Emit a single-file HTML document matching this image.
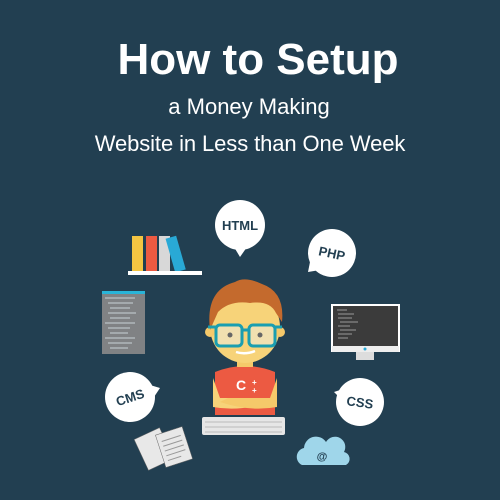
<!DOCTYPE html>
<html><head><style>
html,body{margin:0;padding:0}
body{width:500px;height:500px;background:#223f51;position:relative;overflow:hidden;font-family:"Liberation Sans",sans-serif;color:#fff}
.t{position:absolute;white-space:nowrap;text-align:center}
</style></head><body>
<div class="t" style="left:0;width:516px;top:36px;font-size:44px;font-weight:bold;line-height:48px">How to Setup</div>
<div class="t" style="left:0;width:498px;top:94px;font-size:22px;line-height:26px">a Money Making</div>
<div class="t" style="left:0;width:500px;top:131px;font-size:22px;line-height:26px;letter-spacing:-0.1px">Website in Less than One Week</div>
<svg width="500" height="500" style="position:absolute;left:0;top:0" font-family="Liberation Sans, sans-serif" font-weight="bold">
<circle cx="240" cy="225" r="25" fill="#fff"/><path d="M234 247 L240 257 L247 247Z" fill="#fff"/>
<text x="240" y="230" font-size="13" fill="#223f51" text-anchor="middle">HTML</text>
<circle cx="332" cy="253" r="24" fill="#fff"/><path d="M310 262 L308 272 L320 270Z" fill="#fff"/>
<text x="332" y="258" font-size="13" fill="#223f51" text-anchor="middle" transform="rotate(12 332 253)">PHP</text>
<circle cx="130" cy="397" r="25" fill="#fff"/><path d="M150 385 L160 388 L152 400Z" fill="#fff"/>
<text x="130" y="402" font-size="13" fill="#223f51" text-anchor="middle" transform="rotate(-18 130 397)">CMS</text>
<circle cx="360" cy="402" r="24" fill="#fff"/><path d="M340 390 L334 392 L342 400Z" fill="#fff"/>
<text x="360" y="407" font-size="13" fill="#223f51" text-anchor="middle" transform="rotate(8 360 402)">CSS</text>
<rect x="132" y="236" width="11" height="35" fill="#f4c542"/>
<rect x="146" y="236" width="11" height="35" fill="#ec5a42"/>
<rect x="159" y="236" width="11" height="35" fill="#d8d8d8"/>
<rect x="175" y="236" width="11" height="35" fill="#29a9d6" transform="rotate(-16 180 271)"/>
<rect x="128" y="271" width="74" height="4" fill="#fff"/>
<rect x="102" y="291" width="43" height="63" fill="#808284"/>
<rect x="102" y="291" width="43" height="3" fill="#29b4d8"/>
<g stroke="#c9d2d6" stroke-width="1">
<path d="M105 298h30M108 303h25M110 308h20M108 313h28M110 318h20M105 323h30M108 328h22M110 333h18M105 338h30M108 343h24M110 348h18"/></g>
<rect x="331" y="304" width="69" height="48" fill="#fff"/>
<rect x="333" y="306" width="65" height="40" fill="#3b3b3b"/>
<g stroke="#999" stroke-width="1"><path d="M337 310h10M338 314h16M338 318h14M340 322h18M338 326h12M340 330h16M338 334h14M338 338h10"/></g>
<rect x="332" y="346" width="67" height="6" fill="#eee"/><circle cx="365" cy="349" r="1.5" fill="#29a9d6"/>
<rect x="356" y="352" width="18" height="8" fill="#ddd"/>
<g fill="#e8e8e8" stroke="#666" stroke-width="0.5">
<rect x="140" y="432" width="28" height="34" transform="rotate(-25 154 449)"/>
<rect x="160" y="430" width="28" height="34" transform="rotate(-18 174 447)"/></g>
<g stroke="#999" stroke-width="1" transform="rotate(-18 174 447)"><path d="M164 438h20M164 443h20M164 448h20M164 453h20M164 458h14"/></g>
<path d="M302 465 a9 9 0 0 1 2 -17 a12 12 0 0 1 22 -6 a10 10 0 0 1 18 10 a7 7 0 0 1 2 13Z" fill="#9fd6ea"/>
<text x="322" y="460" font-size="11" fill="#223f51" text-anchor="middle">@</text>
<rect x="202" y="417" width="83" height="18" rx="2" fill="#e6e6e6"/>
<g stroke="#bbb"><path d="M205 422h77M205 427h77M205 432h77"/></g>
<path d="M215 372 Q245 360 275 372 L275 415 L215 415Z" fill="#ec5a42"/>
<path d="M213 378 L213 407 Q240 412 270 402 L262 398 L220 398Z" fill="#f7d379"/>
<path d="M277 378 L277 407 Q250 412 220 402 L228 398 L270 398Z" fill="#f5c96a"/>
<text x="241" y="390" font-size="14" fill="#fff" text-anchor="middle">C</text>
<text x="252" y="385" font-size="8" fill="#fff">+</text><text x="252" y="393" font-size="8" fill="#fff">+</text>
<rect x="237" y="355" width="16" height="12" fill="#f5c96a"/>
<ellipse cx="245" cy="327" rx="35" ry="36" fill="#f7d379"/>
<circle cx="210" cy="332" r="5" fill="#f5c96a"/><circle cx="280" cy="332" r="5" fill="#f5c96a"/>
<path d="M210 330 Q205 290 235 282 Q245 276 262 284 Q285 292 282 322 L276 313 Q270 300 250 303 Q230 300 218 312 Z" fill="#c46a2d"/>
<rect x="216" y="325" width="26" height="21" rx="4" fill="#f1e0b0" stroke="#1a9eb0" stroke-width="3"/>
<rect x="249" y="325" width="26" height="21" rx="4" fill="#f1e0b0" stroke="#1a9eb0" stroke-width="3"/>
<path d="M208 327h8M242 330h7M275 327h7" stroke="#1a9eb0" stroke-width="3"/>
<circle cx="230" cy="335" r="2.5" fill="#666"/><circle cx="260" cy="335" r="2.5" fill="#666"/>
<path d="M236 352 Q245 355 255 351" stroke="#fff" stroke-width="2.5" fill="none"/>
</svg>
</body></html>
